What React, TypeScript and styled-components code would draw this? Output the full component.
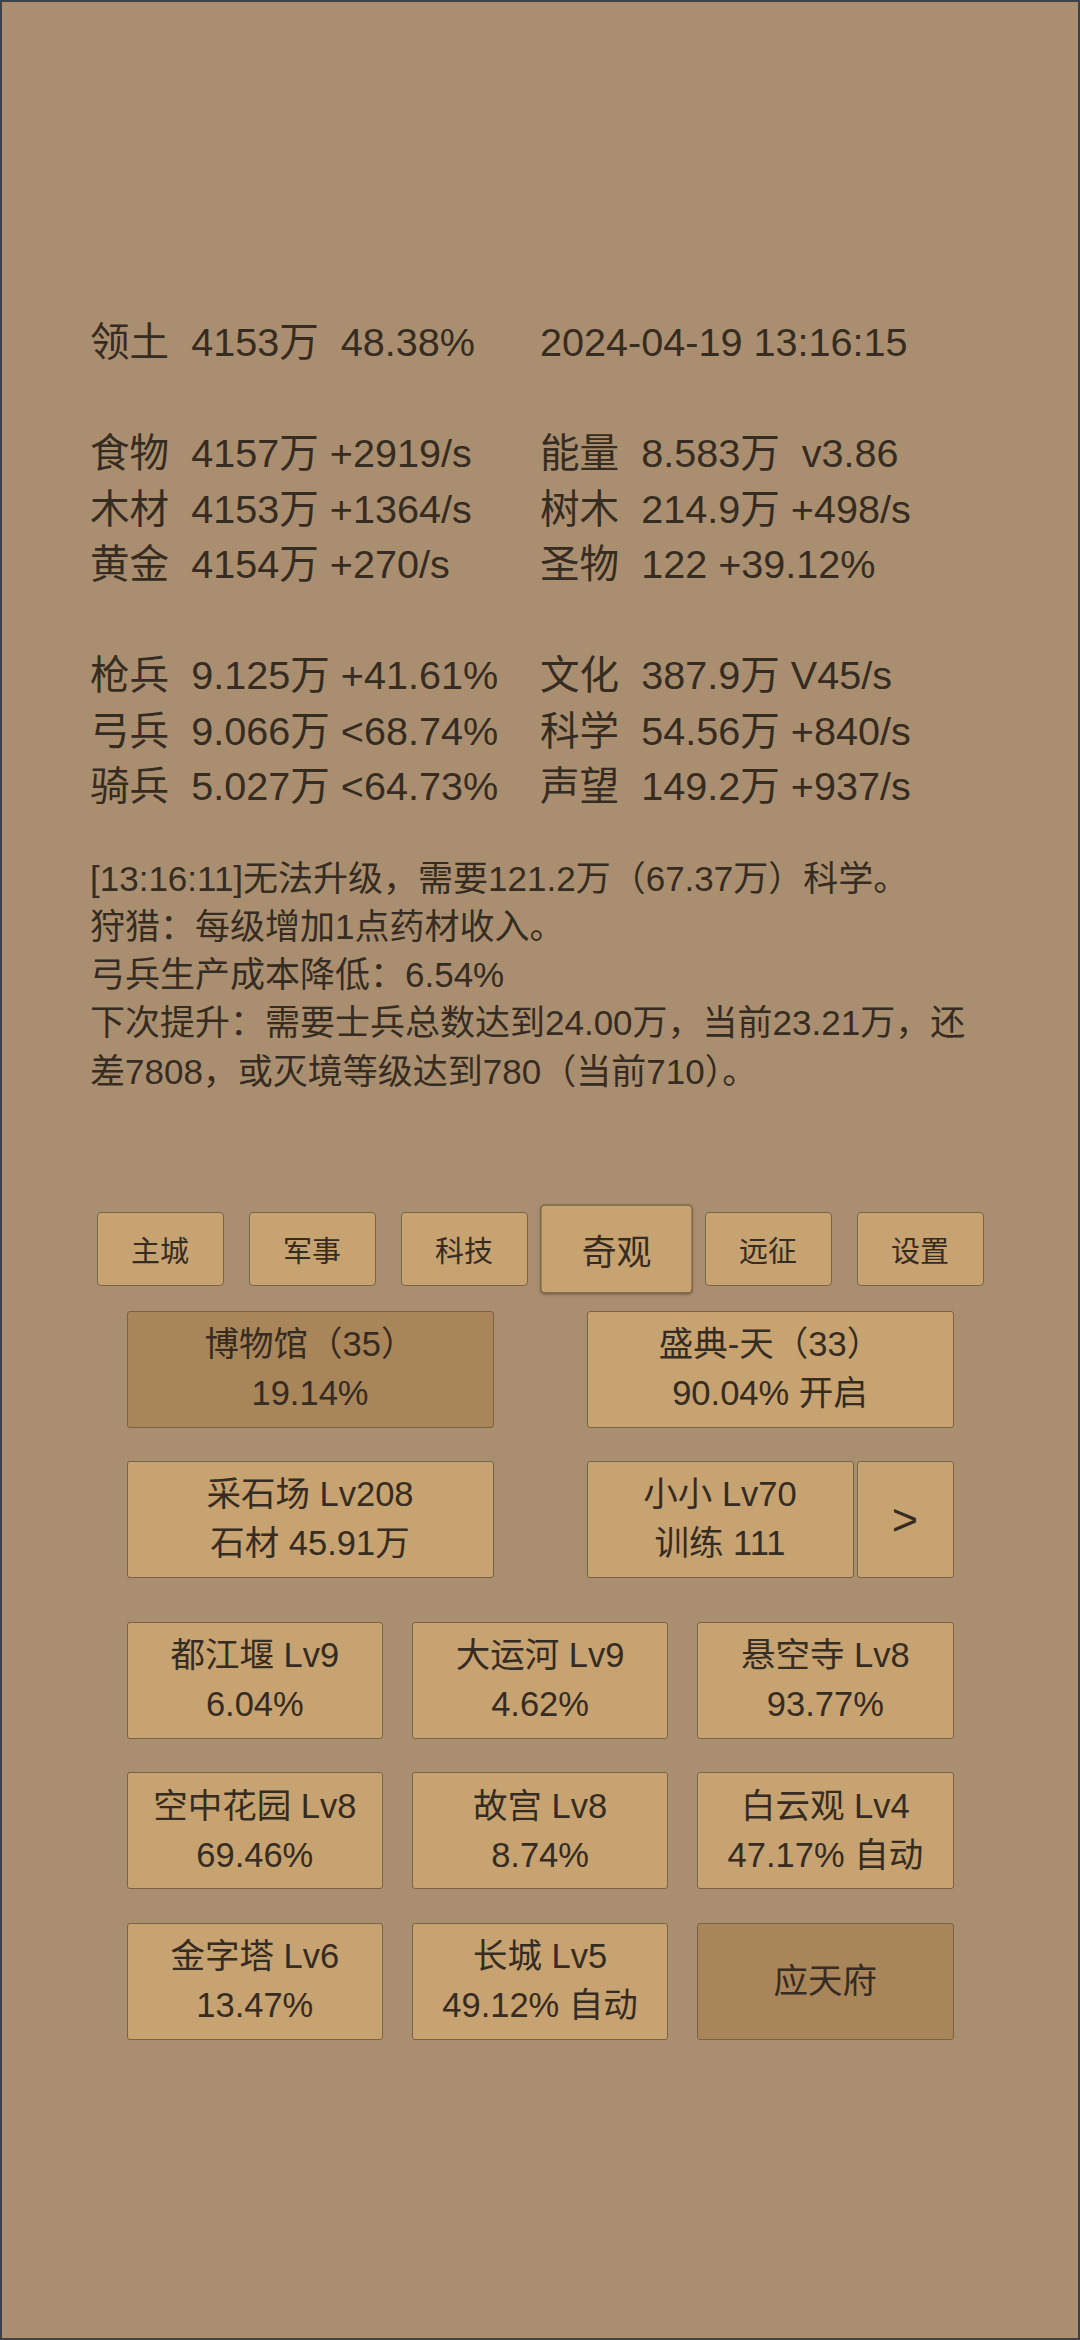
import React from 'react';
import styled, { createGlobalStyle } from 'styled-components';

const GlobalStyle = createGlobalStyle`
    html, body {
        margin: 0;
        padding: 0;
        background: #a98f70;
    }
    * {
        box-sizing: border-box;
    }
`;

const Screen = styled.div`
    width: 1080px;
    height: 2340px;
    border: 2px solid #3e4247;
    background-color: #a98f70;
    color: #362c21;
    font-family: "Liberation Sans", "Noto Sans CJK SC", sans-serif;
    display: flex;
    flex-direction: column;
    align-items: center;
    padding-top: 313px;
    overflow: hidden;
`;

const StatGrid = styled.div`
    width: 1076px;
    padding-left: 88px;
    display: grid;
    grid-template-columns: 450px 1fr;
    grid-auto-rows: 55.5px;
    font-size: 39.6px;
    line-height: 55.5px;
`;

const StatCell = styled.div`
    white-space: pre;
`;

const Blank = styled.div`
    grid-column: 1 / span 2;
`;

const LogBlock = styled.div`
    width: 1076px;
    padding-left: 88px;
    margin-top: 40px;
`;

const LogText = styled.div`
    width: 892px;
    font-size: 35px;
    line-height: 48.3px;
`;

const TabBar = styled.div`
    display: flex;
    justify-content: center;
    margin-top: 116px;
`;

const TabCell = styled.div`
    width: 152px;
    height: 74px;
    display: flex;
    align-items: center;
    justify-content: center;
`;

const Tab = styled.div<{ $active?: boolean }>`
    width: 127px;
    height: 74px;
    display: flex;
    align-items: center;
    justify-content: center;
    background-color: #c6a371;
    border: 1.5px solid #7b6242;
    border-radius: 4px;
    font-size: 29px;
    transform: ${(p) => (p.$active ? 'scale(1.2)' : 'none')};
    box-shadow: ${(p) => (p.$active ? '0 1px 2px rgba(60, 40, 20, 0.35)' : 'none')};
`;

const Panel = styled.div`
    width: 827px;
    display: flex;
    flex-direction: column;
    margin-top: 25px;
`;

const PairRow = styled.div<{ $gap: number }>`
    display: flex;
    justify-content: space-between;
    margin-bottom: ${(p) => p.$gap}px;
`;

const Group = styled.div`
    display: flex;
    gap: 3px;
`;

const Box = styled.div<{ $w: number; $dark?: boolean; $big?: boolean }>`
    width: ${(p) => p.$w}px;
    height: 117px;
    display: flex;
    flex-direction: column;
    align-items: center;
    justify-content: center;
    background-color: ${(p) => (p.$dark ? '#a9855a' : '#c6a371')};
    border: 1.5px solid #7b6242;
    border-radius: 3px;
    font-size: ${(p) => (p.$big ? '45px' : '34.5px')};
    line-height: 49px;
    text-align: center;
    white-space: pre;
`;

const WonderGrid = styled.div`
    display: grid;
    grid-template-columns: repeat(3, 1fr);
    column-gap: 28.7px;
    row-gap: 33.5px;
`;

const leftStats = [
    ['食物  4157万 +2919/s', '能量  8.583万  v3.86'],
    ['木材  4153万 +1364/s', '树木  214.9万 +498/s'],
    ['黄金  4154万 +270/s', '圣物  122 +39.12%'],
];

const armyStats = [
    ['枪兵  9.125万 +41.61%', '文化  387.9万 V45/s'],
    ['弓兵  9.066万 <68.74%', '科学  54.56万 +840/s'],
    ['骑兵  5.027万 <64.73%', '声望  149.2万 +937/s'],
];

const tabs = ['主城', '军事', '科技', '奇观', '远征', '设置'];

const wonders = [
    { name: '都江堰 Lv9', info: '6.04%' },
    { name: '大运河 Lv9', info: '4.62%' },
    { name: '悬空寺 Lv8', info: '93.77%' },
    { name: '空中花园 Lv8', info: '69.46%' },
    { name: '故宫 Lv8', info: '8.74%' },
    { name: '白云观 Lv4', info: '47.17% 自动' },
    { name: '金字塔 Lv6', info: '13.47%' },
    { name: '长城 Lv5', info: '49.12% 自动' },
];

export default function App() {
    return (
        <>
            <GlobalStyle />
            <Screen>
                <StatGrid>
                    <StatCell>领土  4153万  48.38%</StatCell>
                    <StatCell>2024-04-19 13:16:15</StatCell>
                    <Blank />
                    {leftStats.map((row) => (
                        <React.Fragment key={row[0]}>
                            <StatCell>{row[0]}</StatCell>
                            <StatCell>{row[1]}</StatCell>
                        </React.Fragment>
                    ))}
                    <Blank />
                    {armyStats.map((row) => (
                        <React.Fragment key={row[0]}>
                            <StatCell>{row[0]}</StatCell>
                            <StatCell>{row[1]}</StatCell>
                        </React.Fragment>
                    ))}
                </StatGrid>

                <LogBlock>
                    <LogText>[13:16:11]无法升级，需要121.2万（67.37万）科学。</LogText>
                    <LogText>狩猎：每级增加1点药材收入。</LogText>
                    <LogText>弓兵生产成本降低：6.54%</LogText>
                    <LogText>
                        下次提升：需要士兵总数达到24.00万，当前23.21万，还差7808，或灭境等级达到780（当前710）。
                    </LogText>
                </LogBlock>

                <TabBar>
                    {tabs.map((t) => (
                        <TabCell key={t}>
                            <Tab $active={t === '奇观'}>{t}</Tab>
                        </TabCell>
                    ))}
                </TabBar>

                <Panel>
                    <PairRow $gap={33}>
                        <Box $w={367} $dark>
                            <div>博物馆（35）</div>
                            <div>19.14%</div>
                        </Box>
                        <Box $w={367}>
                            <div>盛典-天（33）</div>
                            <div>90.04% 开启</div>
                        </Box>
                    </PairRow>
                    <PairRow $gap={44}>
                        <Box $w={367}>
                            <div>采石场 Lv208</div>
                            <div>石材 45.91万</div>
                        </Box>
                        <Group>
                            <Box $w={267}>
                                <div>小小 Lv70</div>
                                <div>训练 111</div>
                            </Box>
                            <Box $w={97} $big>
                                &gt;
                            </Box>
                        </Group>
                    </PairRow>
                    <WonderGrid>
                        {wonders.map((w) => (
                            <Box key={w.name} $w={256.6}>
                                <div>{w.name}</div>
                                <div>{w.info}</div>
                            </Box>
                        ))}
                        <Box $w={256.6} $dark>
                            应天府
                        </Box>
                    </WonderGrid>
                </Panel>
            </Screen>
        </>
    );
}
